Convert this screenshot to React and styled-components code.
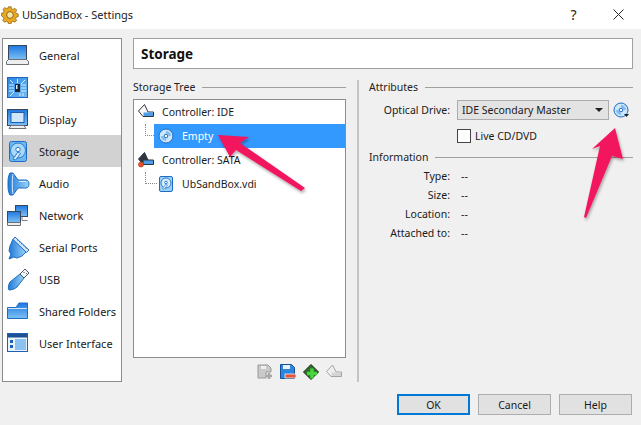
import React from 'react'
import styled, { createGlobalStyle } from 'styled-components'

const Global = createGlobalStyle`
  html, body {
    margin: 0;
    padding: 0;
    background: #f0f0f0;
  }
  body {
    font-family: 'Noto Sans', 'Open Sans', sans-serif;
    font-size: 10.5px;
    color: #1a1a1a;
    overflow: hidden;
  }
`

const Window = styled.div`
  position: relative;
  width: 641px;
  height: 425px;
  display: flex;
  flex-direction: column;
  background: #f0f0f0;
  overflow: hidden;
`

const TitleBar = styled.div`
  height: 29px;
  display: flex;
  align-items: center;
  background: #fff;
  padding-left: 1px;
  flex: none;
`

const TitleText = styled.span`
  margin-left: 3px;
  font-size: 11px;
  color: #222;
`

const TitleButtons = styled.div`
  margin-left: auto;
  display: flex;
  align-items: center;
`

const TitleButton = styled.div`
  width: 45px;
  height: 29px;
  display: flex;
  align-items: center;
  justify-content: center;
  font-size: 14px;
  color: #222;
`

const Body = styled.div`
  display: flex;
  height: 344px;
  margin-top: 9px;
  padding-left: 2px;
  gap: 11px;
  flex: none;
`

const Sidebar = styled.div`
  width: 118px;
  background: #fff;
  border: 1px solid #8c8c8c;
  flex: none;
`

const NavRow = styled.div`
  height: 32px;
  display: flex;
  align-items: center;
  gap: 9px;
  padding-left: 3px;
  font-size: 11px;
  white-space: nowrap;
  background: ${p => (p.$active ? '#d2d2d2' : 'transparent')};
  color: #1a1a1a;
`

const NavIcon = styled.svg`
  width: 24px;
  height: 24px;
  margin-top: 2px;
  flex: none;
`

const Main = styled.div`
  width: 500px;
  display: flex;
  flex-direction: column;
`

const Header = styled.div`
  height: 29px;
  box-sizing: content-box;
  display: flex;
  align-items: center;
  background: #fff;
  border: 1px solid #a0a0a0;
  padding-left: 7px;
  font-size: 13.5px;
  font-weight: 700;
  color: #111;
  flex: none;
`

const Columns = styled.div`
  display: flex;
  margin-top: 10px;
  flex: 1;
`

const TreeColumn = styled.div`
  width: 213px;
  display: flex;
  flex-direction: column;
  flex: none;
`

const GroupTitle = styled.div`
  height: 16px;
  display: flex;
  align-items: center;
  gap: 7px;
  width: 100%;
  color: #222;
  white-space: nowrap;
  &::after {
    content: '';
    flex: 1;
    height: 1px;
    background: #a0a0a0;
  }
`

const TreeBox = styled.div`
  width: 211px;
  height: 257px;
  background: #fff;
  border: 1px solid #8c8c8c;
  margin-top: 4px;
`

const TreeRow = styled.div`
  position: relative;
  height: 24px;
  display: flex;
  align-items: center;
  gap: 8px;
  margin-left: ${p => (p.$child ? '20px' : '0')};
  padding-left: 4px;
  background: ${p => (p.$selected ? '#3399ff' : 'transparent')};
  color: ${p => (p.$selected ? '#fff' : '#1a1a1a')};
  ${p =>
    p.$child &&
    `
    &::before {
      content: '';
      position: absolute;
      left: -9px;
      top: 0;
      width: ${p.$selected ? 9 : 12}px;
      height: 12px;
      border-left: 1px dotted #888;
      border-bottom: 1px dotted #888;
      box-sizing: border-box;
    }
  `}
`

const TreeIcon = styled.svg`
  width: 16px;
  height: 16px;
  flex: none;
`

const Toolbar = styled.div`
  display: flex;
  justify-content: flex-end;
  gap: 7px;
  padding-right: 4px;
  margin-top: 6px;
`

const ToolIcon = styled.svg`
  width: 16px;
  height: 16px;
`

const Divider = styled.div`
  width: 2px;
  height: 302px;
  background: #c4c4c4;
  margin: 1px 0 0 11px;
  flex: none;
`

const AttrColumn = styled.div`
  flex: 1;
  margin-left: 10px;
  display: flex;
  flex-direction: column;
`

const FormRow = styled.div`
  display: flex;
  align-items: center;
  margin-top: ${p => p.$top || 0}px;
`

const FieldLabel = styled.div`
  width: 81px;
  text-align: right;
  color: #1a1a1a;
  flex: none;
`

const Combo = styled.div`
  width: 141px;
  height: 18px;
  box-sizing: content-box;
  margin-left: 7px;
  display: flex;
  align-items: center;
  justify-content: space-between;
  padding: 0 5px 0 4px;
  background: #e3e3e3;
  border: 1px solid #acacac;
  color: #1a1a1a;
`

const Caret = styled.span`
  width: 0;
  height: 0;
  border-left: 4px solid transparent;
  border-right: 4px solid transparent;
  border-top: 4px solid #222;
`

const DiscButton = styled.svg`
  width: 16px;
  height: 16px;
  margin-left: 4px;
  overflow: visible;
`

const CheckRow = styled.div`
  height: 14px;
  display: flex;
  align-items: center;
  gap: 4px;
  margin: 9px 0 0 88px;
  color: #1a1a1a;
`

const CheckBox = styled.span`
  width: 12px;
  height: 12px;
  background: #fff;
  border: 1px solid #444;
`

const InfoRow = styled.div`
  height: 19px;
  display: flex;
  align-items: center;
`

const InfoValue = styled.span`
  margin-left: 11px;
  color: #222;
`

const Footer = styled.div`
  display: flex;
  justify-content: flex-end;
  gap: 8px;
  padding-right: 9px;
  margin-top: 12px;
`

const Button = styled.div`
  width: 73px;
  height: 21px;
  box-sizing: border-box;
  display: flex;
  align-items: center;
  justify-content: center;
  background: #e1e1e1;
  border: ${p => (p.$primary ? '2px solid #0078d7' : '1px solid #adadad')};
  color: #1a1a1a;
`

const Arrows = styled.svg`
  position: absolute;
  left: 0;
  top: 0;
  width: 641px;
  height: 425px;
  pointer-events: none;
`

const Defs = styled.svg`
  display: block;
  width: 0;
  height: 0;
  position: absolute;
`

const Gear = () => (
  <svg width="18" height="18" viewBox="0 0 18 18">
    <path
      d="M7.500 1h3l.5 2.200 1.600.7 2-1.200 2 2-1.200 2 .7 1.600 2.100.5v3l-2.100.5-.7 1.600 1.200 2-2 2-2-1.200-1.600.7-.5 2.100h-3l-.5-2.100-1.600-.7-2 1.200-2-2 1.200-2-.7-1.600L0 11V8l2.100-.5.7-1.600-1.200-2 2-2 2 1.200 1.600-.7z"
      transform="scale(.92) translate(.5 -.2)"
      fill="#e9a820"
      stroke="#7a5410"
      strokeWidth=".7"
    />
    <circle cx="9" cy="9" r="3.400" fill="#fbe7a8" stroke="#8a6214" />
  </svg>
)

const navIcons = {
  general: (
    <>
      <rect x="2.500" y="1.500" width="18" height="14" fill="url(#blueV)" stroke="#39465a" />
      <path d="M2.500 15.500h18l2 2v3H.5v-3z" fill="#eceef0" stroke="#6c7075" />
    </>
  ),
  system: (
    <>
      <rect x="1.500" y="1.500" width="20" height="20" fill="url(#blueD)" stroke="#1c63c4" />
      <path d="M11.500 3v4M3 9h5M3 12h5M3 15h5M15 9h5M15 12h5M15 15h5M4 20l4-4M19 4l-4 4M4 4l3 3M14 17v3M17 17v3" stroke="#d8ecff" fill="none" />
      <rect x="9" y="8" width="5" height="8" fill="#1a2430" />
      <rect x="10" y="9" width="1.500" height="4" fill="#d8ecff" />
    </>
  ),
  display: (
    <>
      <rect x="1.500" y="1.500" width="20" height="16" fill="url(#blueV)" stroke="#3d4656" />
      <rect x="5" y="4.500" width="13" height="10" fill="#cfe6fb" stroke="#1e5fb4" />
      <path d="M5 17.500h13l2 3H3z" fill="#eceef0" stroke="#6c7075" />
    </>
  ),
  storage: (
    <>
      <rect x="3.500" y="1.500" width="17" height="20" rx="2" fill="#6db6f0" stroke="#1f6cc8" />
      <circle cx="12" cy="10.500" r="7.500" fill="#a9d8f8" stroke="#2a7ad0" />
      <circle cx="12" cy="9.500" r="2.200" fill="#fff" stroke="#2a7ad0" />
      <path d="M12 12l-5 7 2.500 1 5-6.500z" fill="#d8eefc" stroke="#2a7ad0" />
    </>
  ),
  audio: (
    <>
      <path d="M4 1h3l5 7h8c2 0 3 2 3 4s-1 4-3 4h-8l-5 7H4c-2-3-2-7-2-11s0-8 2-11z" fill="url(#blueH)" stroke="#1d6cc4" />
      <path d="M7 2c-1 3-1 17 0 20" stroke="#d8ecff" fill="none" />
      <path d="M13 9.500h7" stroke="#d8ecff" fill="none" />
    </>
  ),
  network: (
    <>
      <rect x="9.500" y="1.500" width="12" height="11" fill="url(#blueV)" stroke="#3d4656" />
      <path d="M16 12.500v4h5.500" fill="none" stroke="#7c7f84" />
      <rect x="1.500" y="7.500" width="13" height="11" fill="url(#blueV)" stroke="#3d4656" />
      <path d="M1.500 18.500h13v3h-13z" fill="#eceef0" stroke="#6c7075" />
    </>
  ),
  serial: (
    <>
      <path d="M7 3L20 16l-4 4-5 2-3-1-5 2 2-5-2-3 1-5z" fill="url(#blueH)" stroke="#1d6cc4" />
      <path d="M9 1l14 13-2.500 2.500L7 3.500z" fill="#cfe6fb" stroke="#1d6cc4" />
      <path d="M11 3.500l10 9.500" stroke="#3d4656" strokeDasharray="1 2" />
    </>
  ),
  usb: (
    <>
      <path d="M14 6l4 4-7 9c-2 2-6 3-8 3-1-1-1-5 1-8z" fill="url(#blueH)" stroke="#1d6cc4" />
      <path d="M14 6l5-5 4 4-5 5z" fill="#f2f4f6" stroke="#4a5868" />
      <path d="M17.500 4l1 1M20 6l.8-.8" stroke="#4a5868" />
    </>
  ),
  folders: (
    <>
      <path d="M1.500 7.500H10l3-4.500h8.500v15.500h-20z" fill="url(#blueV)" stroke="#1d6cc4" />
      <path d="M2 8.500h19" stroke="#cfe6fb" />
    </>
  ),
  ui: (
    <>
      <rect x="1.500" y="1.500" width="20" height="18" fill="#e8f2fb" stroke="#1d5fb8" />
      <rect x="2" y="2" width="19" height="3.500" fill="#1d4f94" />
      <rect x="9" y="7" width="11" height="11" fill="#8cc2f2" />
      <path d="M4 8h3v3H4zM4 13h3v3H4z" fill="#1d5fb8" />
    </>
  ),
}

const navItems = [
  ['general', 'General'],
  ['system', 'System'],
  ['display', 'Display'],
  ['storage', 'Storage'],
  ['audio', 'Audio'],
  ['network', 'Network'],
  ['serial', 'Serial Ports'],
  ['usb', 'USB'],
  ['folders', 'Shared Folders'],
  ['ui', 'User Interface'],
]

const ControllerIcon = ({ sata }) => (
  <TreeIcon viewBox="0 0 16 16">
    <path d="M6.500 .5L.5 7 5 12.500h10.500V8H10z" fill={sata ? '#2f363e' : '#f8f9fa'} stroke="#2f363e" />
    <path d="M5.500 8.500h9.500v3.500H5.500z" fill="#4c9fe8" />
    {sata && <circle cx="3" cy="12.500" r="2.600" fill="#e2552a" stroke="#a83210" strokeWidth=".5" />}
  </TreeIcon>
)

const Disc = () => (
  <>
    <circle cx="8" cy="8" r="7" fill="#cfe6fa" stroke="#1d6cc4" />
    <path d="M8 3a5 5 0 0 1 5 5H10.500A2.500 2.500 0 0 0 8 5.500zM8 13a5 5 0 0 1-5-5h2.500A2.500 2.500 0 0 0 8 10.500z" fill="#7fbdf0" />
    <circle cx="8" cy="8" r="1.800" fill="#fff" stroke="#1d6cc4" />
  </>
)

const Toolbox = () => (
  <Toolbar>
    <ToolIcon viewBox="0 0 16 16">
      <path d="M1 1h10l3 3v4H9v6H1z" fill="#c9c9c9" stroke="#9a9a9a" />
      <rect x="4" y="2" width="5" height="3" fill="#efefef" />
      <path d="M12 9v6M9 12h6" stroke="#a8a8a8" strokeWidth="2.500" />
    </ToolIcon>
    <ToolIcon viewBox="0 0 16 16">
      <path d="M.5.500h11l3 3v11H.5z" fill="#2d86dc" stroke="#174f94" />
      <rect x="3" y="1" width="7" height="4" fill="#e8f2fb" />
      <rect x="5" y="10" width="11" height="4" fill="#e2553c" stroke="#fff" strokeWidth=".7" />
    </ToolIcon>
    <ToolIcon viewBox="0 0 16 16">
      <path d="M.5 8L8 .5 15.500 8 8 15.500z" fill="#2f6b2a" stroke="#16240f" />
      <path d="M9 4.500v10M4 9.500h10" stroke="#46d63e" strokeWidth="3.500" />
    </ToolIcon>
    <ToolIcon viewBox="0 0 16 16">
      <path d="M6.500 1L.5 7.500 5 12.500h10.500V8H10z" fill="#efefef" stroke="#a4a4a4" />
      <path d="M5.500 8.500h9.500v3.500H5.500z" fill="#d4d4d4" />
    </ToolIcon>
  </Toolbar>
)

const info = ['Type:', 'Size:', 'Location:', 'Attached to:']

export default function App() {
  return (
    <Window>
      <Global />
      <Defs aria-hidden="true">
        <defs>
          <linearGradient id="blueV" x1="0" y1="0" x2="0" y2="1">
            <stop offset="0" stopColor="#1f78e0" />
            <stop offset="1" stopColor="#7cc0f5" />
          </linearGradient>
          <linearGradient id="blueH" x1="0" y1="0" x2="1" y2="0">
            <stop offset="0" stopColor="#1f78d8" />
            <stop offset="1" stopColor="#9ad4f8" />
          </linearGradient>
          <linearGradient id="blueD" x1="0" y1="0" x2="1" y2="1">
            <stop offset="0" stopColor="#2a86e4" />
            <stop offset="1" stopColor="#74bcf2" />
          </linearGradient>
        </defs>
      </Defs>
      <TitleBar>
        <Gear />
        <TitleText>UbSandBox - Settings</TitleText>
        <TitleButtons>
          <TitleButton>?</TitleButton>
          <TitleButton>
            <svg width="11" height="11" viewBox="0 0 11 11">
              <path d="M.5.500l10 10M10.500.500l-10 10" stroke="#222" fill="none" />
            </svg>
          </TitleButton>
        </TitleButtons>
      </TitleBar>
      <Body>
        <Sidebar>
          {navItems.map(([key, label]) => (
            <NavRow key={key} $active={key === 'storage'}>
              <NavIcon viewBox="0 0 24 24">{navIcons[key]}</NavIcon>
              {label}
            </NavRow>
          ))}
        </Sidebar>
        <Main>
          <Header>Storage</Header>
          <Columns>
            <TreeColumn>
              <GroupTitle>Storage Tree</GroupTitle>
              <TreeBox>
                <TreeRow>
                  <ControllerIcon />
                  Controller: IDE
                </TreeRow>
                <TreeRow $child $selected>
                  <TreeIcon viewBox="0 0 16 16">
                    <Disc />
                  </TreeIcon>
                  Empty
                </TreeRow>
                <TreeRow>
                  <ControllerIcon sata />
                  Controller: SATA
                </TreeRow>
                <TreeRow $child>
                  <TreeIcon viewBox="0 0 16 16">
                    <rect x="1.500" y=".5" width="13" height="15" rx="1.500" fill="#9bd0f6" stroke="#1f6cc8" />
                    <circle cx="8" cy="7" r="5" fill="#d8eefc" stroke="#2a7ad0" />
                    <circle cx="8" cy="6.500" r="1.300" fill="#fff" stroke="#2a7ad0" />
                    <path d="M8 8l-3.500 4.500 1.500.8L9.500 9z" fill="#eef7fe" stroke="#2a7ad0" strokeWidth=".7" />
                  </TreeIcon>
                  UbSandBox.vdi
                </TreeRow>
              </TreeBox>
              <Toolbox />
            </TreeColumn>
            <Divider />
            <AttrColumn>
              <GroupTitle>Attributes</GroupTitle>
              <FormRow $top={5}>
                <FieldLabel>Optical Drive:</FieldLabel>
                <Combo>
                  IDE Secondary Master
                  <Caret />
                </Combo>
                <DiscButton viewBox="0 0 16 16">
                  <Disc />
                  <path d="M11 12h5l-2.500 3z" fill="#222" />
                </DiscButton>
              </FormRow>
              <CheckRow>
                <CheckBox />
                Live CD/DVD
              </CheckRow>
              <FormRow $top={6}>
                <GroupTitle>Information</GroupTitle>
              </FormRow>
              <FormRow $top={1} />
              {info.map(label => (
                <InfoRow key={label}>
                  <FieldLabel>{label}</FieldLabel>
                  <InfoValue>--</InfoValue>
                </InfoRow>
              ))}
            </AttrColumn>
          </Columns>
        </Main>
      </Body>
      <Footer>
        <Button $primary>OK</Button>
        <Button>Cancel</Button>
        <Button>Help</Button>
      </Footer>
      <Arrows viewBox="0 0 641 425">
        <defs>
          <filter id="arrowShadow" x="-20%" y="-20%" width="140%" height="140%">
            <feDropShadow dx="1" dy="2" stdDeviation="1.500" floodColor="#000" floodOpacity=".35" />
          </filter>
        </defs>
        <path d="M218 135L249 137L240 143L305 188L301 191L236 150L230 157z" fill="#f2145f" filter="url(#arrowShadow)" />
        <path d="M615 128L623 159L612 156L586 218L584 217L600 146L592 149z" fill="#f2145f" filter="url(#arrowShadow)" />
      </Arrows>
    </Window>
  )
}
